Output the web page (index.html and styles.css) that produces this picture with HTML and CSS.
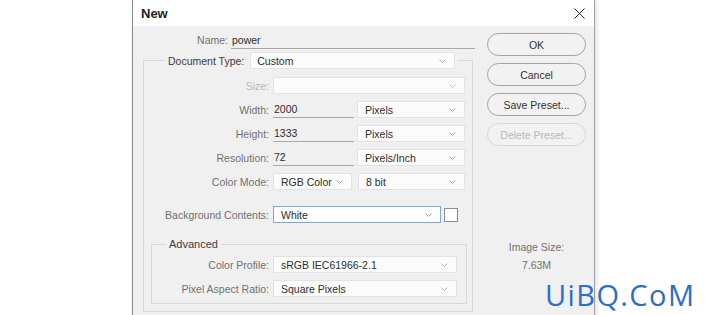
FILE: index.html
```html
<!DOCTYPE html>
<html lang="en">
<head>
    <meta charset="UTF-8">
    <title>New</title>
    <link rel="stylesheet" href="styles.css">
</head>
<body>
    <div class="dialog">
        <div class="titlebar">
            <span class="title">New</span>
            <svg class="close" width="11" height="11" viewBox="0 0 11 11">
                <path d="M0.5 0.5 L10.5 10.5 M10.5 0.5 L0.5 10.5" stroke="#222" stroke-width="1" fill="none"/>
            </svg>
        </div>
        <div class="content">
            <div class="form">
                <div class="name_row">
                    <span class="label name_label">Name:</span>
                    <span class="field name_field">power</span>
                </div>

                <fieldset class="group">
                    <legend>
                        <div class="legend_inner">
                            <span class="legend_text">Document Type:</span>
                            <div class="select doc_select"><span>Custom</span><svg class="chev" width="7" height="4" viewBox="0 0 7 4"><path d="M0.5 0.5 L3.5 3.5 L6.5 0.5" stroke="#a8a8a8" fill="none"/></svg></div>
                        </div>
                    </legend>

                    <div class="row">
                        <span class="label disabled">Size:</span>
                        <div class="select w_full"><span></span><svg class="chev" width="7" height="4" viewBox="0 0 7 4"><path d="M0.5 0.5 L3.5 3.5 L6.5 0.5" stroke="#c4c4c4" fill="none"/></svg></div>
                    </div>
                    <div class="row">
                        <span class="label">Width:</span>
                        <span class="field w_input">2000</span>
                        <div class="select w_unit"><span>Pixels</span><svg class="chev" width="7" height="4" viewBox="0 0 7 4"><path d="M0.5 0.5 L3.5 3.5 L6.5 0.5" stroke="#a8a8a8" fill="none"/></svg></div>
                    </div>
                    <div class="row">
                        <span class="label">Height:</span>
                        <span class="field w_input">1333</span>
                        <div class="select w_unit"><span>Pixels</span><svg class="chev" width="7" height="4" viewBox="0 0 7 4"><path d="M0.5 0.5 L3.5 3.5 L6.5 0.5" stroke="#a8a8a8" fill="none"/></svg></div>
                    </div>
                    <div class="row">
                        <span class="label">Resolution:</span>
                        <span class="field w_input">72</span>
                        <div class="select w_unit"><span>Pixels/Inch</span><svg class="chev" width="7" height="4" viewBox="0 0 7 4"><path d="M0.5 0.5 L3.5 3.5 L6.5 0.5" stroke="#a8a8a8" fill="none"/></svg></div>
                    </div>
                    <div class="row">
                        <span class="label">Color Mode:</span>
                        <div class="select w_mode"><span>RGB Color</span><svg class="chev" width="7" height="4" viewBox="0 0 7 4"><path d="M0.5 0.5 L3.5 3.5 L6.5 0.5" stroke="#a8a8a8" fill="none"/></svg></div>
                        <div class="select w_bits"><span>8 bit</span><svg class="chev" width="7" height="4" viewBox="0 0 7 4"><path d="M0.5 0.5 L3.5 3.5 L6.5 0.5" stroke="#a8a8a8" fill="none"/></svg></div>
                    </div>

                    <div class="row bg_row">
                        <span class="label">Background Contents:</span>
                        <div class="select w_bg focused"><span>White</span><svg class="chev" width="7" height="4" viewBox="0 0 7 4"><path d="M0.5 0.5 L3.5 3.5 L6.5 0.5" stroke="#a8a8a8" fill="none"/></svg></div>
                        <span class="swatch"></span>
                    </div>

                    <fieldset class="group advanced">
                        <legend class="adv_legend">Advanced</legend>
                        <div class="row">
                            <span class="label adv_label">Color Profile:</span>
                            <div class="select w_adv"><span>sRGB IEC61966-2.1</span><svg class="chev" width="7" height="4" viewBox="0 0 7 4"><path d="M0.5 0.5 L3.5 3.5 L6.5 0.5" stroke="#b8b8b8" fill="none"/></svg></div>
                        </div>
                        <div class="row">
                            <span class="label adv_label">Pixel Aspect Ratio:</span>
                            <div class="select w_adv"><span>Square Pixels</span><svg class="chev" width="7" height="4" viewBox="0 0 7 4"><path d="M0.5 0.5 L3.5 3.5 L6.5 0.5" stroke="#b8b8b8" fill="none"/></svg></div>
                        </div>
                    </fieldset>
                </fieldset>
            </div>

            <div class="side">
                <div class="buttons">
                    <button class="btn">OK</button>
                    <button class="btn">Cancel</button>
                    <button class="btn">Save Preset...</button>
                    <button class="btn" disabled>Delete Preset...</button>
                </div>
                <div class="image_size">
                    <div>Image Size:</div>
                    <div>7.63M</div>
                </div>
            </div>
        </div>
    </div>
    <div class="watermark">UiBQ.CoM</div>
</body>
</html>
```

FILE: styles.css
```css
* {
    box-sizing: border-box;
}

body {
    margin: 0;
    width: 705px;
    height: 315px;
    overflow: hidden;
    position: relative;
    background-color: #fff;
    color: #333;
    font-family: "Liberation Sans", Arial, sans-serif;
    font-size: 10.5px;
}

.dialog {
    margin-left: 132px;
    width: 463px;
    height: 330px;
    background-color: #f0f0f0;
    border-left: 1px solid #8a8a8a;
    border-right: 1px solid #a0a0a0;
    box-shadow: 2px 0 5px rgba(0, 0, 0, 0.12);
}

.titlebar {
    height: 26px;
    background-color: #fff;
    display: flex;
    align-items: center;
    justify-content: space-between;
    padding: 0 9px 0 8px;
}
.title {
    font-size: 13px;
    font-weight: bold;
    color: #222;
}

.content {
    display: flex;
    padding-top: 6px;
}

.form {
    width: 342px;
}

.name_row {
    display: flex;
    align-items: center;
    height: 16px;
}
.name_label {
    width: 98px;
    padding-right: 3px;
}
.name_field {
    width: 244px;
    height: 16px;
    padding-left: 2px;
}

.label {
    text-align: right;
    color: #707070;
    white-space: nowrap;
    flex-shrink: 0;
}
.label.disabled {
    color: #b8b8b8;
}

.group {
    margin: 4px 0 0 10px;
    padding: 8px 0 7px 0;
    width: 330px;
    min-width: 0;
    border: 1px solid #d8d8d8;
}
.group legend {
    margin-left: 21px;
    padding: 0 3px;
}
.legend_inner {
    display: flex;
    align-items: center;
    height: 17px;
}
.legend_text {
    color: #3c3c3c;
}

.row {
    display: flex;
    align-items: center;
    height: 17px;
}
.row + .row {
    margin-top: 7px;
}
.row .label {
    width: 129px;
    padding-right: 4px;
}

.field {
    display: flex;
    align-items: center;
    border-bottom: 1px solid #a8a8a8;
    color: #2e2e2e;
    height: 17px;
    padding-left: 1px;
}

.select {
    display: flex;
    align-items: center;
    justify-content: space-between;
    height: 17px;
    padding: 0 8px 0 7px;
    background-color: #fcfcfc;
    border: 1px solid #e3e3e3;
    color: #2e2e2e;
    flex-shrink: 0;
}
.select.focused {
    border-color: #7ea9d3;
    background-color: #fdfdfd;
}

.doc_select {
    width: 205px;
    margin-left: 6px;
    padding-left: 6px;
}
.w_full {
    width: 192px;
}
.w_input {
    width: 81px;
}
.w_unit {
    width: 108px;
    margin-left: 3px;
}
.w_mode {
    width: 79px;
}
.w_bits {
    width: 107px;
    margin-left: 6px;
}

.row.bg_row {
    margin-top: 16px;
}
.w_bg {
    width: 168px;
}
.swatch {
    width: 14px;
    height: 14px;
    margin-left: 3px;
    border: 1px solid #8e8e8e;
    background-color: #fff;
}

.group.advanced {
    margin: 14px 0 0 7px;
    padding: 5px 0 6px 0;
    width: 316px;
}
.group .adv_legend {
    margin-left: 14px;
    padding: 0 3px;
    color: #3c3c3c;
    font-size: 11px;
    line-height: 14px;
}
.row .adv_label {
    width: 121px;
}
.w_adv {
    width: 184px;
}

.side {
    margin-left: 12px;
    margin-top: 1px;
    width: 99px;
}
.buttons {
    display: flex;
    flex-direction: column;
    gap: 7px;
}
.btn {
    width: 99px;
    height: 23px;
    border: 1px solid #a4a4a4;
    border-radius: 12px;
    background-color: #f2f2f2;
    color: #333;
    font-family: inherit;
    font-size: 10.5px;
    padding: 0;
}
.btn:disabled {
    border-color: #d6d6d6;
    color: #b8b8b8;
}

.image_size {
    margin-top: 92px;
    text-align: center;
    color: #707070;
    line-height: 18px;
}

.watermark {
    position: absolute;
    left: 545px;
    top: 279px;
    font-family: "Open Sans", sans-serif;
    font-size: 29px;
    line-height: 32px;
    letter-spacing: 1.4px;
    color: #2d6ec7;
}
```
